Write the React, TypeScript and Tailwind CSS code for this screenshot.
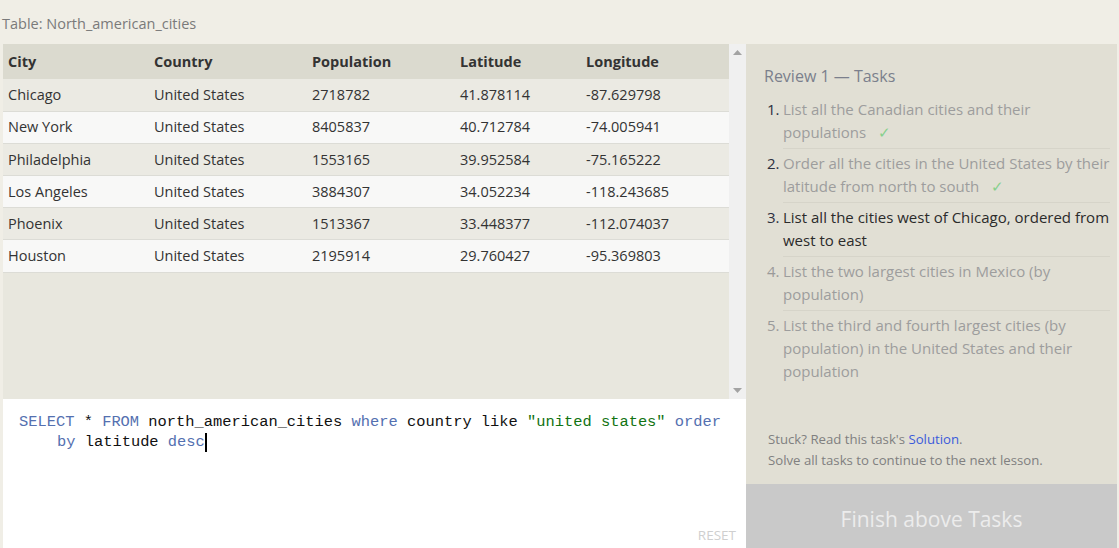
import React from 'react';

interface City {
  city: string;
  country: string;
  population: string;
  latitude: string;
  longitude: string;
}

const rows: City[] = [
  { city: "Chicago", country: "United States", population: "2718782", latitude: "41.878114", longitude: "-87.629798" },
  { city: "New York", country: "United States", population: "8405837", latitude: "40.712784", longitude: "-74.005941" },
  { city: "Philadelphia", country: "United States", population: "1553165", latitude: "39.952584", longitude: "-75.165222" },
  { city: "Los Angeles", country: "United States", population: "3884307", latitude: "34.052234", longitude: "-118.243685" },
  { city: "Phoenix", country: "United States", population: "1513367", latitude: "33.448377", longitude: "-112.074037" },
  { city: "Houston", country: "United States", population: "2195914", latitude: "29.760427", longitude: "-95.369803" },
];

interface Task {
  text: string;
  state: 'done' | 'current' | 'todo';
}

const tasks: Task[] = [
  { text: "List all the Canadian cities and their populations", state: 'done' },
  { text: "Order all the cities in the United States by their latitude from north to south", state: 'done' },
  { text: "List all the cities west of Chicago, ordered from west to east", state: 'current' },
  { text: "List the two largest cities in Mexico (by population)", state: 'todo' },
  { text: "List the third and fourth largest cities (by population) in the United States and their population", state: 'todo' },
];

const sans = "font-['Open_Sans','Noto_Sans',sans-serif]";

export default function App() {
  return (
    <div className={`w-[1119px] h-[548px] bg-[#f0eee6] flex flex-col overflow-hidden ${sans}`}>
      {/* table name */}
      <div className="h-[44px] shrink-0 pl-[2px] pt-[14px] text-[14.5px] leading-[20px] text-[#7a7a7a]">
        Table: North_american_cities
      </div>

      <div className="flex flex-1 min-h-0">
        {/* left: results + editor */}
        <div className="w-[743px] ml-[3px] flex flex-col">
          <div className="h-[355px] shrink-0 flex bg-[#e8e7de]">
            <div className="flex-1">
              <table className="w-full table-fixed border-collapse text-[14.5px]">
                <colgroup>
                  <col className="w-[151px]" />
                  <col className="w-[158px]" />
                  <col className="w-[148px]" />
                  <col className="w-[126px]" />
                  <col />
                </colgroup>
                <thead>
                  <tr className="h-[35px] bg-[#dbdacf] text-left text-[#333]">
                    <th className="pl-[5px] font-bold">City</th>
                    <th className="font-bold">Country</th>
                    <th className="font-bold">Population</th>
                    <th className="font-bold">Latitude</th>
                    <th className="font-bold">Longitude</th>
                  </tr>
                </thead>
                <tbody>
                  {rows.map((r, i) => (
                    <tr
                      key={r.city}
                      className={`h-[32.2px] border-b border-[#dcdcd6] text-[#333] ${i % 2 === 0 ? 'bg-[#ebeae3]' : 'bg-[#f8f8f7]'}`}
                    >
                      <td className="pl-[5px]">{r.city}</td>
                      <td>{r.country}</td>
                      <td>{r.population}</td>
                      <td>{r.latitude}</td>
                      <td>{r.longitude}</td>
                    </tr>
                  ))}
                </tbody>
              </table>
            </div>
            {/* scrollbar */}
            <div className="w-[17px] bg-[#f0f0f0] flex flex-col justify-between items-center py-[6px]">
              <svg width="9" height="5" viewBox="0 0 9 5"><path d="M0 5 L4.5 0 L9 5 Z" fill="#a3a3a3" /></svg>
              <svg width="9" height="5" viewBox="0 0 9 5"><path d="M0 0 L4.5 5 L9 0 Z" fill="#a3a3a3" /></svg>
            </div>
          </div>

          {/* editor */}
          <div className="flex-1 bg-white relative pt-[13px] pl-[16px] font-['Liberation_Mono',monospace] text-[15.4px] leading-[20px] text-[#111]">
            <div>
              <span className="text-[#5470b0]">SELECT</span> * <span className="text-[#5470b0]">FROM</span> north_american_cities{' '}
              <span className="text-[#5470b0]">where</span> country like <span className="text-[#127312]">"united states"</span>{' '}
              <span className="text-[#5470b0]">order</span>
            </div>
            <div className="pl-[38px] flex items-center">
              <span className="text-[#5470b0]">by</span>&nbsp;latitude&nbsp;<span className="text-[#5470b0]">desc</span>
              <span className="inline-block w-[2px] h-[19px] bg-black" />
            </div>
            <div className={`absolute right-[10px] bottom-[3px] text-[13.5px] text-[#cfcfcf] ${sans}`}>RESET</div>
          </div>
        </div>

        {/* right: tasks */}
        <div className="w-[371px] bg-[#e1dfd4] flex flex-col">
          <div className="flex-1 pl-[18px] pr-[7px] pt-[21px]">
            <h2 className="text-[16px] leading-[22px] text-[#7b7f8c]">Review 1 — Tasks</h2>
            <ol className="mt-[11px] text-[15px] leading-[23px]">
              {tasks.map((t, i) => (
                <li key={i} className="flex">
                  <span
                    className={`w-[19px] shrink-0 pl-[3px] ${t.state === 'todo' ? 'text-[#9a9a9a]' : 'text-[#2d3040]'}`}
                  >
                    {i + 1}.
                  </span>
                  <div
                    className={`flex-1 pb-[4px] mb-[3px] border-b ${i === tasks.length - 1 ? 'border-transparent' : 'border-[#d6d4c9]'} ${t.state === 'current' ? 'text-[#2b2b2b]' : 'text-[#9d9d9d]'}`}
                  >
                    {t.text}
                    {t.state === 'done' && <span className="ml-[12px] text-[#86d08c]">✓</span>}
                  </div>
                </li>
              ))}
            </ol>
          </div>
          <div className="pl-[22px] pb-[13px] text-[13.2px] leading-[21px] text-[#808080]">
            <div>
              Stuck? Read this task's <span className="text-[#3b5bdb]">Solution</span>.
            </div>
            <div>Solve all tasks to continue to the next lesson.</div>
          </div>
          <div className="h-[64px] shrink-0 bg-[#c9c9c9] flex items-center justify-center pt-[8px] text-[21px] text-[#ececec]">
            Finish above Tasks
          </div>
        </div>
      </div>
    </div>
  );
}
